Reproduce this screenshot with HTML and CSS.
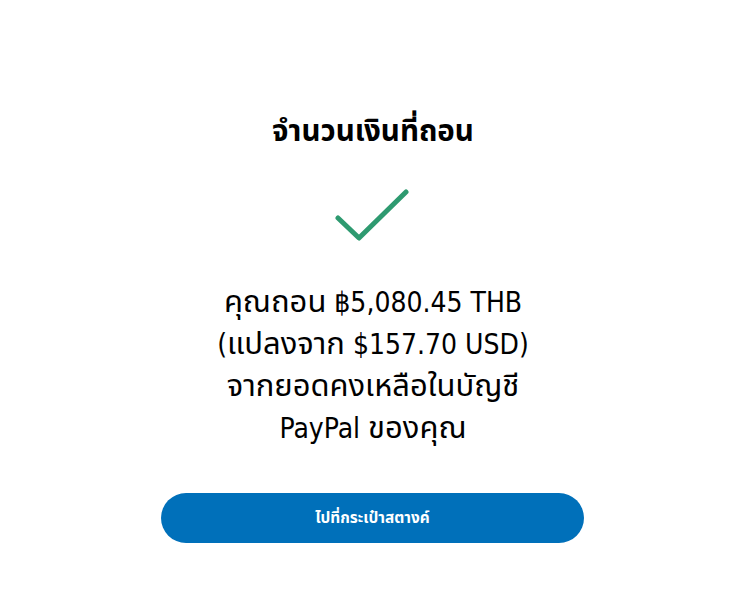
FILE: index.html
```html
<!DOCTYPE html>
<html lang="th">
<head>
<meta charset="utf-8">
<link rel="stylesheet" href="styles.css">
</head>
<body>
<main class="page">
  <h1 class="title"><span class="th">จำนวนเงินที่ถอน</span></h1>
  <svg class="check" width="76" height="56" viewBox="0 0 76 56">
    <path d="M3 30 L24 50 L71 4" fill="none" stroke="#2e9a70" stroke-width="5" stroke-linecap="round" stroke-linejoin="round"/>
  </svg>
  <p class="message"><span class="th">คุณถอน</span> ฿5,080.45 THB<br>(<span class="th">แปลงจาก</span> $157.70 USD)<br><span class="th">จากยอดคงเหลือในบัญชี</span><br>PayPal <span class="th">ของคุณ</span></p>
  <button class="btn"><span class="th">ไปที่กระเป๋าสตางค์</span></button>
</main>
</body>
</html>
```

FILE: styles.css
```css
html, body {
  margin: 0;
  padding: 0;
  background: #ffffff;
}
body {
  font-family: "DejaVu Sans Condensed", "Noto Sans Thai", "Noto Sans", sans-serif;
  color: #000;
}
.th {
  font-family: "Noto Sans Thai", "Noto Sans", sans-serif;
  font-size: 1.19em;
  line-height: 1;
}
.page {
  width: 749px;
  display: flex;
  flex-direction: column;
  align-items: center;
  padding-top: 116px;
}
.title {
  margin: 0;
  font-size: 24px;
  font-weight: bold;
  line-height: 34px;
  margin-left: -3px;
}
.title .th {
  font-size: 1.23em;
}
.check {
  display: block;
  margin-top: 38px;
  margin-left: -3px;
}
.message {
  margin: 38px 0 0;
  font-size: 28px;
  line-height: 42px;
  text-align: center;
  margin-left: -3px;
}
.message .th {
  font-size: 1.105em;
}
.btn {
  margin-top: 43px;
  width: 423px;
  height: 50px;
  border: none;
  border-radius: 25px;
  background: #0070ba;
  color: #fff;
  font-family: inherit;
  font-weight: bold;
  font-size: 14px;
  margin-left: -4px;
  line-height: 20px;
}
.btn .th {
  font-size: 1.1em;
}
```
